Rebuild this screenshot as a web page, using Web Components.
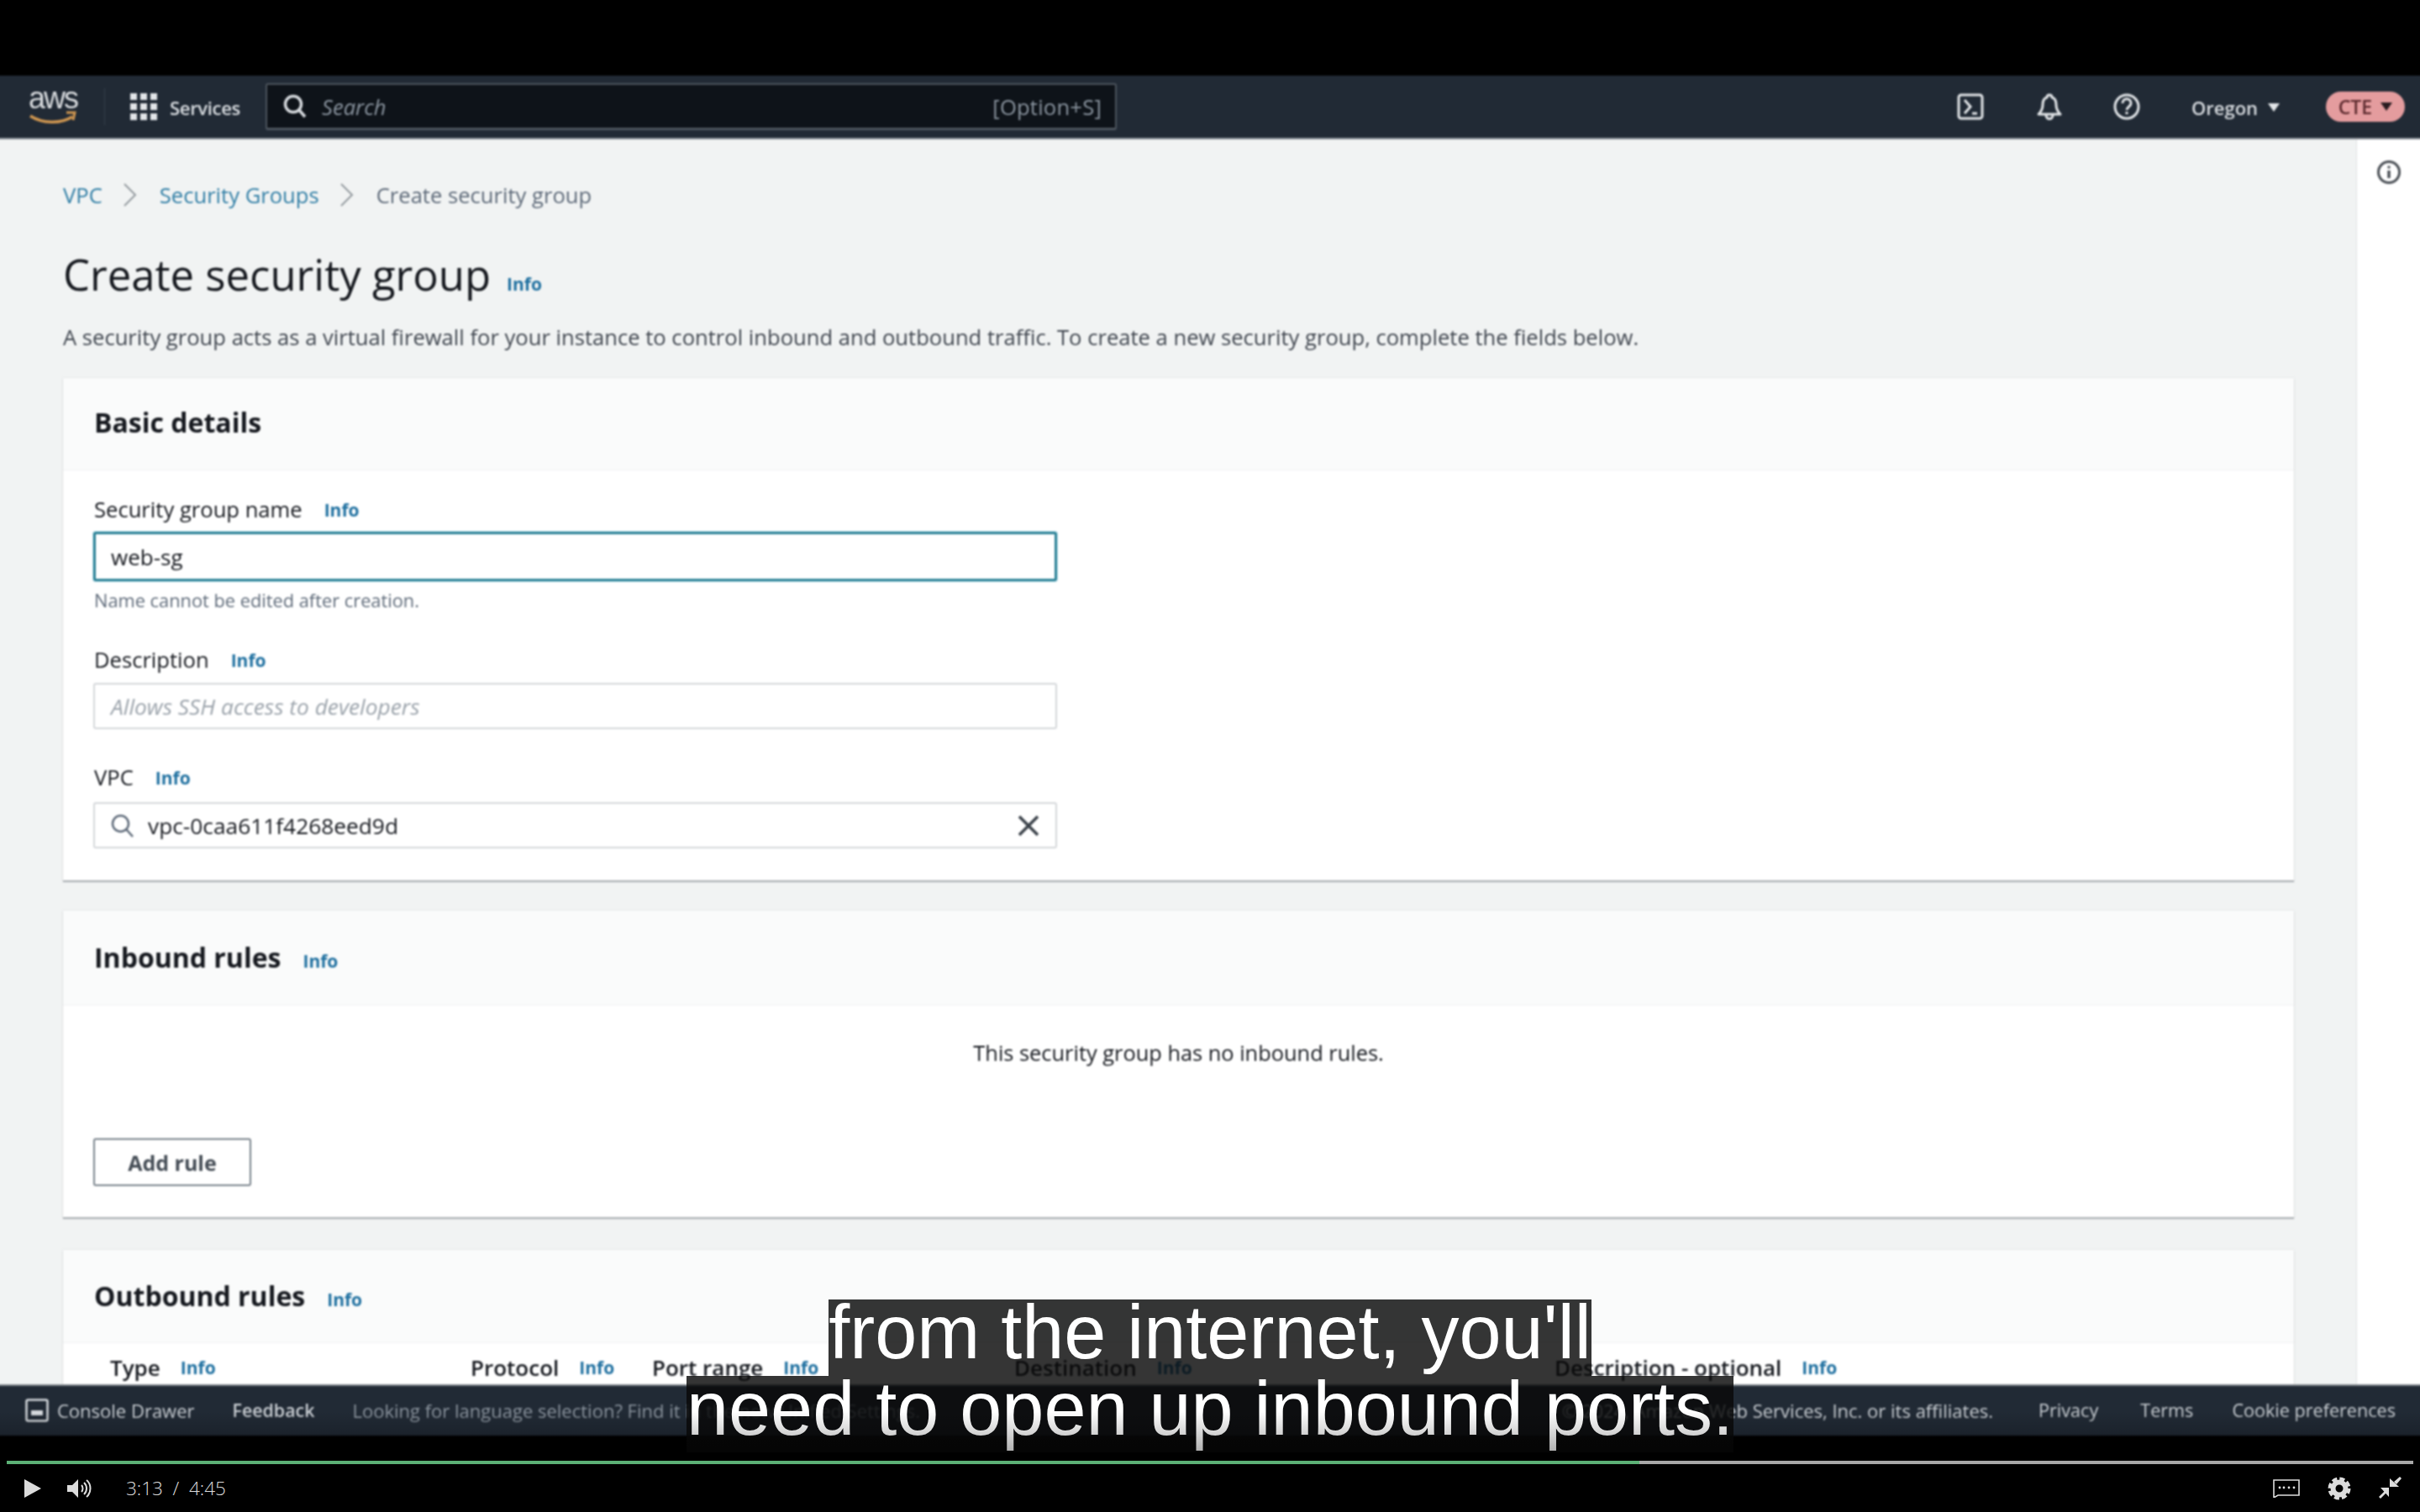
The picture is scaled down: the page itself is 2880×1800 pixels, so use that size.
<!DOCTYPE html>
<html lang="en">
<head>
<meta charset="utf-8">
<title>Create security group</title>
<style>
  html, body { margin: 0; padding: 0; background: #000; }
  body { width: 2880px; height: 1800px; overflow: hidden; position: relative; font-family: "Open Sans", "Noto Sans", sans-serif; }
</style>
</head>
<body>
<video-frame>
  <aws-console>
    <aws-nav slot="nav"></aws-nav>
    <aws-breadcrumbs></aws-breadcrumbs>
    <page-title>Create security group</page-title>
    <aws-card head="110" pad="4">
      <span slot="title">Basic details</span>
      <form-field label="Security group name" hint="Name cannot be edited after creation." style="padding-top:32px;--label-gap:9px">
        <text-box focused value="web-sg"></text-box>
      </form-field>
      <form-field label="Description" style="margin-top:41px">
        <text-box placeholder="Allows SSH access to developers"></text-box>
      </form-field>
      <form-field label="VPC" style="margin-top:43px;--label-gap:12px">
        <text-box search value="vpc-0caa611f4268eed9d"></text-box>
      </form-field>
      <div style="height:38px"></div>
    </aws-card>
    <aws-card head="113" pad="0">
      <span slot="title">Inbound rules</span>
      <info-link slot="info"></info-link>
      <empty-rules>This security group has no inbound rules.</empty-rules>
    </aws-card>
    <aws-card head="111" pad="0" style="margin-top:3px">
      <span slot="title">Outbound rules</span>
      <info-link slot="info"></info-link>
      <rule-columns></rule-columns>
    </aws-card>
    <aws-footer slot="footer"></aws-footer>
  </aws-console>
  <player-bar slot="player"></player-bar>
</video-frame>
<video-caption></video-caption>

<script>
// little helper, every element is the same: open shadow root + style + markup
function makeElement(name, css, html) {
  customElements.define(name, class extends HTMLElement {
    constructor() {
      super();
      const root = this.attachShadow({ mode: "open" });
      const markup = typeof html === "function" ? html(this) : html;
      root.innerHTML = `<style>${css}</style>${markup}`;
    }
  });
}

makeElement("video-frame", `
  :host { display: flex; flex-direction: column; width: 2880px; height: 1800px; background: #000; overflow: hidden; }
  .top { height: 90px; flex: none; }
`, `<div class="top"></div><slot></slot><slot name="player"></slot>`);

// the console is 4px wider on each side so the blur of the video does not fade its edges
makeElement("aws-console", `
  :host { display: flex; flex-direction: column; width: 2888px; margin-left: -4px; height: 1619px; flex: none; filter: blur(0.9px); overflow: hidden; }
  .main { display: flex; height: 1482px; flex: none; background: #f1f3f3; overflow: hidden; }
  .content { flex: 1; min-width: 0; padding: 50px 74px 0 79px; display: flex; flex-direction: column; }
  ::slotted(aws-card) { margin-bottom: 36px; }
  .tools { width: 75px; flex: none; background: #fff; border-left: 1px solid #dfe2e4; display: flex; justify-content: center; padding: 24px 4px 0 0; box-sizing: content-box; }
  svg { width: 30px; height: 30px; }
`, `
  <slot name="nav"></slot>
  <div class="main">
    <div class="content"><slot></slot></div>
    <div class="tools">
      <svg viewBox="0 0 30 30" fill="none" stroke="#4a4f55" stroke-width="3">
        <circle cx="15" cy="15" r="12.5"/>
        <path d="M15 13v9" stroke-width="3.5"/><path d="M15 7.5v3" stroke-width="3"/>
      </svg>
    </div>
  </div>
  <slot name="footer"></slot>
`);

makeElement("aws-nav", `
  :host { display: flex; align-items: center; height: 76px; flex: none; box-sizing: border-box; background: #212a35; border-bottom: 2px solid #8b9198; color: #d9dde1; font-family: "Open Sans", sans-serif; padding-right: 22px; }
  .logo { margin-left: 38px; width: 58px; display: flex; flex-direction: column; align-items: center; height: 52px; position: relative; }
  .logo span { font: 36px/36px "Liberation Sans", sans-serif; letter-spacing: -2px; color: #d8dbde; margin-top: -2px; }
  .logo svg { position: absolute; left: 0; top: 24px; }
  .sep { width: 1px; height: 44px; background: #343e4a; margin-left: 32px; }
  .grid { margin-left: 30px; display: grid; grid-template-columns: repeat(3, 8px); grid-auto-rows: 8px; gap: 4px 4px; }
  .grid i { background: #e2e5e8; display: block; }
  .svc { margin-left: 15px; padding-top: 2px; font-size: 22.2px; font-weight: 600; letter-spacing: -0.4px; width: 114px; }
  .search { width: 1013px; height: 56px; box-sizing: border-box; background: #0e1319; border: 2px solid #4c545d; border-bottom-width: 3px; border-radius: 3px; display: flex; align-items: center; padding: 0 16px 0 19px; color: #8b95a0; font-size: 25.6px; }
  .search svg { margin-right: 18px; }
  .search em { font-style: italic; padding-top: 2px; }
  .search b { margin-left: auto; font-weight: 400; letter-spacing: .2px; padding-top: 2px; }
  .right { margin-left: auto; display: flex; align-items: center; }
  .right svg { display: block; }
  .region { margin-left: 61px; padding-top: 2px; font-size: 22px; font-weight: 600; display: flex; align-items: center; gap: 12px; width: 160px; }
  .tri { width: 0; height: 0; border-left: 7px solid transparent; border-right: 7px solid transparent; border-top: 10px solid #e2e5e8; }
  .pill { width: 94px; height: 36px; border-radius: 18px; background: #e49c9e; color: #5c2a2e; display: flex; align-items: center; justify-content: center; gap: 10px; font-size: 23px; font-weight: 600; }
  .pill .tri { border-top-color: #2a1c20; }
`, `
  <div class="logo">
    <span>aws</span>
    <svg width="58" height="30" viewBox="0 0 58 30" fill="none">
      <path d="M2 13c14 9 36 10 50 1" stroke="#cf9650" stroke-width="3.5"/>
      <path d="M45 9l10 0-2 9" stroke="#cf9650" stroke-width="3"/>
    </svg>
  </div>
  <div class="sep"></div>
  <div class="grid"><i></i><i></i><i></i><i></i><i></i><i></i><i></i><i></i><i></i></div>
  <div class="svc">Services</div>
  <div class="search">
    <svg width="28" height="30" viewBox="0 0 28 30" fill="none" stroke="#d5d9dd" stroke-width="3.5">
      <circle cx="12" cy="12" r="9.5"/><path d="M19 19l7 8"/>
    </svg>
    <em>Search</em><b>[Option+S]</b>
  </div>
  <div class="right">
    <svg width="32" height="32" viewBox="0 0 32 32" fill="none" stroke="#e2e5e8" stroke-width="3" style="margin-right:62px">
      <rect x="2" y="2" width="28" height="28" rx="3"/>
      <path d="M9 8l7 8-7 8M18 24h6"/>
    </svg>
    <svg width="32" height="32" viewBox="0 0 32 32" fill="none" stroke="#e2e5e8" stroke-width="3" style="margin-right:60px">
      <path d="M16 2c-2 0-3 1-3 3-4 1-5 5-5 9 0 4-1 7-5 11h26c-4-4-5-7-5-11 0-4-1-8-5-9 0-2-1-3-3-3z" stroke-linejoin="round"/>
      <path d="M12 26c0 6 8 6 8 0"/>
    </svg>
    <svg width="32" height="32" viewBox="0 0 32 32" fill="none" stroke="#e2e5e8" stroke-width="3">
      <circle cx="16" cy="16" r="14"/>
      <path d="M11 12c0-7 10-7 10 0 0 4-5 4-5 8"/><path d="M16 22v3"/>
    </svg>
    <div class="region">Oregon <span class="tri"></span></div>
    <div class="pill">CTE <span class="tri"></span></div>
  </div>
`);

makeElement("aws-breadcrumbs", `
  :host { display: flex; align-items: center; height: 32px; flex: none; font-size: 25.6px; color: #5f6b7a; }
  a { color: #327fa6; }
  svg { margin: 0 26px 0 24px; flex: none; }
`, `
  <a>VPC</a>
  <svg width="18" height="28" viewBox="0 0 18 28" fill="none" stroke="#969ca1" stroke-width="2"><path d="M2 1l13 13L2 27"/></svg>
  <a>Security Groups</a>
  <svg width="18" height="28" viewBox="0 0 18 28" fill="none" stroke="#969ca1" stroke-width="2"><path d="M2 1l13 13L2 27"/></svg>
  <span>Create security group</span>
`);

makeElement("info-link", `
  :host { display: inline-block; font: 700 21px "Open Sans", sans-serif; color: #1f70a0; }
`, `Info`);

makeElement("page-title", `
  :host { display: block; flex: none; margin-top: 47px; }
  .row { display: flex; align-items: baseline; height: 64px; line-height: 64px; font-size: 50.8px; font-weight: 500; color: #16191f; }
  info-link { margin-left: 19px; }
  p { margin: 25px 0 30px; height: 36px; line-height: 36px; font-size: 25.6px; color: #414750; white-space: nowrap; }
`, `
  <div class="row"><slot></slot><info-link></info-link></div>
  <p>A security group acts as a virtual firewall for your instance to control inbound and outbound traffic. To create a new security group, complete the fields below.</p>
`);

makeElement("aws-card", `
  :host { display: block; flex: none; background: #fff; box-shadow: 0 2px 1px #a9aeb2, 0 0 2px #d5d8da; }
  header { display: block; box-sizing: border-box; padding: 0 37px; background: #fafbfb; line-height: 40px; font-size: 32px; font-weight: 700; color: #16191f; border-bottom: 1px solid #f1f2f3; }
  .in { height: 100%; display: flex; align-items: center; gap: 26px; }
  ::slotted(info-link) { margin-top: 8px; }
  .body { padding: 0 36px; }
`, (el) => `
  <header style="height:${el.getAttribute("head")}px;padding-bottom:${el.getAttribute("pad")}px">
    <div class="in"><slot name="title"></slot><slot name="info"></slot></div>
  </header>
  <div class="body"><slot></slot></div>
`);

makeElement("form-field", `
  :host { display: block; width: 1147px; }
  .lab { display: flex; align-items: center; box-sizing: border-box; height: 32px; padding: 0 0 3px 1px; font-size: 25.6px; color: #16191f; gap: 26px; margin-bottom: var(--label-gap, 10px); }
  .hint { height: 28px; line-height: 25px; margin-top: 10px; padding-left: 1px; font-size: 21.8px; color: #5f6b7a; }
`, (el) => `
  <div class="lab"><span>${el.getAttribute("label")}</span><info-link></info-link></div>
  <slot></slot>
  ${el.hasAttribute("hint") ? `<div class="hint">${el.getAttribute("hint")}</div>` : ""}
`);

makeElement("text-box", `
  :host { display: flex; align-items: center; box-sizing: border-box; height: 55px; padding: 0 19px; background: #fff; border: 2px solid #d4d7da; border-radius: 3px; font-size: 26.3px; color: #16191f; }
  :host([focused]) { height: 59px; border: 3px solid #2b8196; box-shadow: 0 0 0 1px #c5e6ee; padding: 0 18px; font-size: 26px; }
  em { color: #9ba3ab; font-style: italic; }
  .mag { margin-right: 17px; flex: none; }
  .x { margin-left: auto; flex: none; }
`, (el) => {
  let out = "";
  if (el.hasAttribute("search")) {
    out += `<svg class="mag" width="27" height="28" viewBox="0 0 27 28" fill="none" stroke="#5f6b7a" stroke-width="2.5"><circle cx="11.5" cy="11.5" r="9.5"/><path d="M18 18l8 9"/></svg>`;
  }
  out += el.hasAttribute("placeholder") ? `<em>${el.getAttribute("placeholder")}</em>` : `<span>${el.getAttribute("value")}</span>`;
  if (el.hasAttribute("search")) {
    out += `<svg class="x" width="26" height="26" viewBox="0 0 26 26" fill="none" stroke="#3a4149" stroke-width="3.5"><path d="M2 2l22 22M24 2L2 24"/></svg>`;
  }
  return out;
});

makeElement("empty-rules", `
  :host { display: block; padding-top: 38px; padding-bottom: 37px; }
  p { margin: 0 0 84px; height: 36px; line-height: 36px; text-align: center; font-size: 25.4px; color: #16191f; }
  .btn { width: 188px; height: 57px; box-sizing: border-box; border: 2px solid #79838c; border-radius: 3px; background: #fff; display: flex; align-items: center; justify-content: center; font-size: 25px; font-weight: 700; color: #444c55; }
`, `<p><slot></slot></p><div class="btn">Add rule</div>`);

makeElement("rule-columns", `
  :host { display: grid; grid-template-columns: 429px 216px 431px 643px 1fr; margin: 13px 0 0 20px; height: 70px; }
  div { display: flex; align-items: center; height: 32px; gap: 24px; font-size: 26px; font-weight: 600; color: #16191f; }
`, `
  <div>Type <info-link></info-link></div>
  <div>Protocol <info-link></info-link></div>
  <div>Port range <info-link></info-link></div>
  <div>Destination <info-link></info-link></div>
  <div>Description - optional <info-link></info-link></div>
`);

makeElement("aws-footer", `
  :host { display: flex; align-items: center; height: 61px; flex: none; box-sizing: border-box; background: #212a35; border-top: 2px solid #7f858b; color: #c9ced3; font-size: 22px; padding: 0 33px 2px 34px; white-space: nowrap; }
  svg { margin-right: 10px; flex: none; }
  .fb { margin-left: 45px; font-weight: 600; font-size: 21.4px; }
  .msg { margin-left: 45px; flex: 1; display: flex; justify-content: space-between; color: #8b949e; }
  .msg .co { color: #c9ced3; }
  a { margin-left: 54px; font-weight: 500; font-size: 21.6px; }
  a + a { margin-left: 50px; }
  a + a + a { margin-left: 46px; }
`, `
  <svg width="28" height="28" viewBox="0 0 28 28" fill="none" stroke="#d5d9dd" stroke-width="2.5"><rect x="1.5" y="1.5" width="25" height="25" rx="2"/><rect x="7" y="14" width="14" height="6" fill="#d5d9dd" stroke="none"/></svg>
  <span>Console Drawer</span>
  <span class="fb">Feedback</span>
  <span class="msg"><span>Looking for language selection? Find it in the new Unified Settings.</span><span class="co">© 2024, Amazon Web Services, Inc. or its affiliates.</span></span>
  <a>Privacy</a><a>Terms</a><a>Cookie preferences</a>
`);

makeElement("player-bar", `
  :host { display: block; flex: 1; background: #000; padding-top: 30px; }
  .track { height: 4px; margin: 0 8px; background: #a8a8a8; }
  .track i { display: block; height: 100%; width: 1943px; background: #5cb176; }
  .row { display: flex; align-items: center; height: 57px; padding: 0 21px 0 29px; color: #dcdcdc; }
  .time { margin-left: 40px; font: 300 22.5px "Open Sans", sans-serif; white-space: pre; }
  .r { margin-left: auto; display: flex; align-items: center; }
`, `
  <div class="track"><i></i></div>
  <div class="row">
    <svg width="20" height="22" viewBox="0 0 20 22" fill="#dcdcdc"><path d="M0 0l20 11L0 22z"/></svg>
    <svg width="30" height="24" viewBox="0 0 30 24" style="margin-left:31px" fill="none" stroke="#dcdcdc" stroke-width="2"><path d="M0 8h6l7-7v22l-7-7H0z" fill="#dcdcdc" stroke="none"/><path d="M17 8c2 2 2 6 0 8M20 5c4 4 4 10 0 14M23 2c6 5 6 15 0 20"/></svg>
    <span class="time">3:13  /  4:45</span>
    <div class="r">
      <svg width="32" height="22" viewBox="0 0 32 22" fill="none" stroke="#dcdcdc" stroke-width="1.6"><path d="M1 1h30v18H6l-5 3z"/><g fill="#dcdcdc" stroke="none"><circle cx="8" cy="10" r="1.4"/><circle cx="13" cy="10" r="1.4"/><circle cx="19" cy="10" r="1.4"/><circle cx="25" cy="10" r="1.4"/></g></svg>
      <svg width="28" height="28" viewBox="0 0 28 28" fill="none" stroke="#dcdcdc" style="margin-left:33px"><circle cx="14" cy="14" r="7.5" stroke-width="6"/><circle cx="14" cy="14" r="11.5" stroke-width="4" stroke-dasharray="6 3.03"/></svg>
      <svg width="28" height="27" viewBox="0 0 28 27" fill="#dcdcdc" stroke="none" style="margin-left:33px"><path d="M13 12V2l11 10z"/><path d="M12 13H2l10 11z"/><path d="M18 6l7-6 2 2-6 7zM9 19l-7 7-2-2 7-7z"/></svg>
    </div>
  </div>
`);

// burnt in captions, they lie over the console
makeElement("video-caption", `
  :host { position: absolute; left: 0; top: 1547px; width: 2880px; display: flex; flex-direction: column; align-items: center; font: 90px "Liberation Sans", Arial, sans-serif; color: #fff; }
  div { width: fit-content; height: 91px; line-height: 78px; background: rgba(8, 8, 8, .82); white-space: pre; }
  .shade { position: absolute; left: 0; top: 133px; width: 2880px; height: 50px; background: linear-gradient(rgba(0,0,0,0), rgba(0,0,0,.32)); pointer-events: none; }
`, `<div>from the internet, you'll</div><div>need to open up inbound ports.</div><span class="shade"></span>`);
</script>
</body>
</html>
